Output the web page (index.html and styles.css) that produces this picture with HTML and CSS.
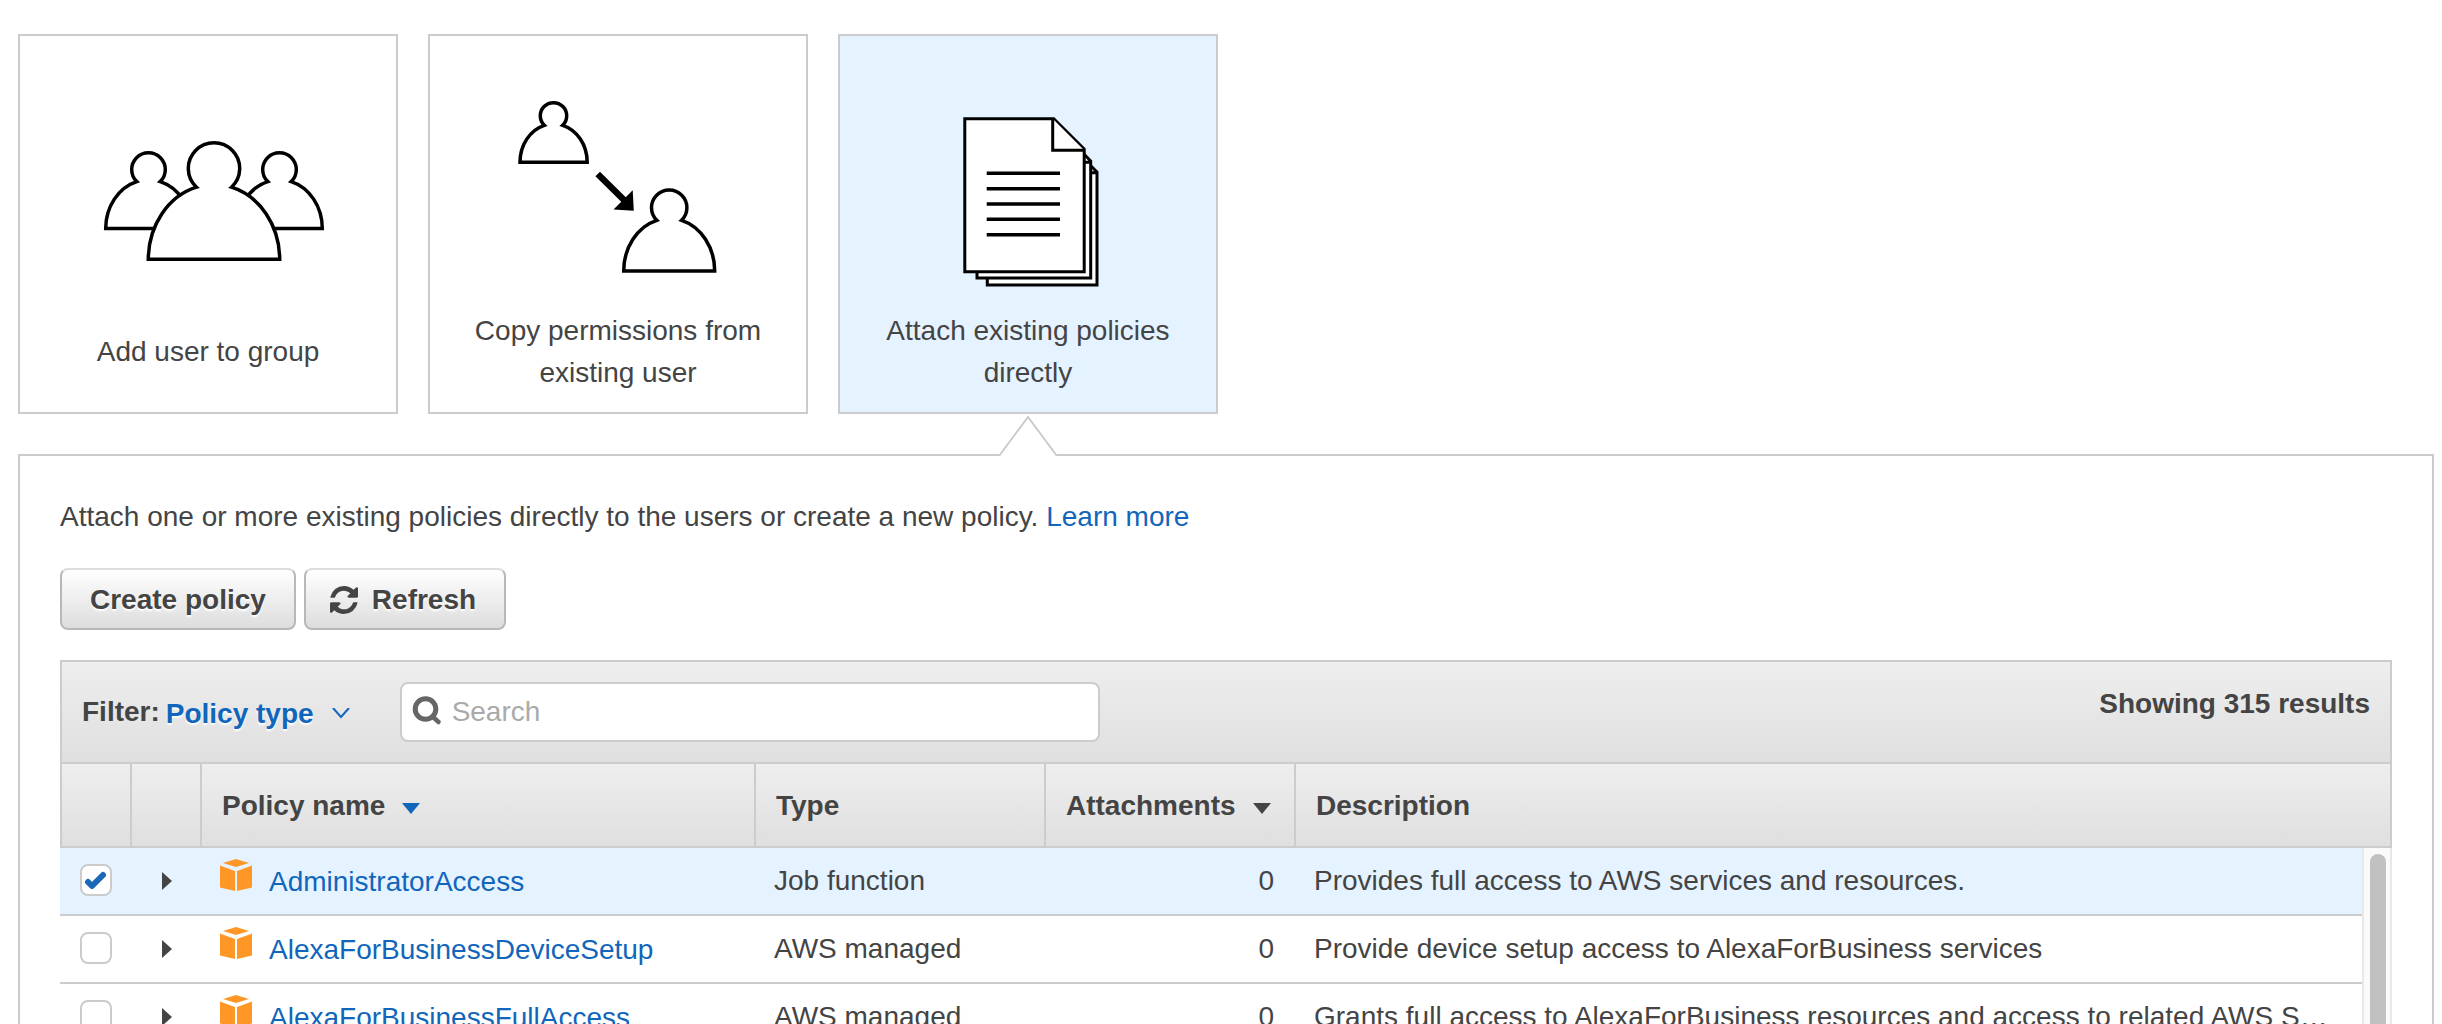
FILE: index.html
```html
<!DOCTYPE html>
<html lang="en">
<head>
<meta charset="utf-8">
<title>Set permissions</title>
<link rel="stylesheet" href="styles.css">
</head>
<body>
<svg class="defs" aria-hidden="true">
  <symbol id="cube" viewBox="0 0 32 32">
    <path fill="#ff9727" d="M16 0 29 4 16 8 3 4Z M0 6.500 15 12V32L0 28.500Z M32 6.500 17 12V32L32 28.500Z"/>
  </symbol>
</svg>
<main class="page">
  <div class="options">
    <button type="button" class="option">
      <svg class="option-art" viewBox="20 36 376 272" aria-hidden="true">
        <g fill="#fff" stroke="#000" stroke-width="3.5">
          <path d="M105.7 228.5A42.8 48.8 0 0 1 136.8 181.6A16.8 16.8 0 1 1 160.2 181.6A42.8 48.8 0 0 1 191.3 228.5Z"/>
          <path d="M236.7 228.5A42.8 48.8 0 0 1 267.8 181.6A16.8 16.8 0 1 1 291.2 181.6A42.8 48.8 0 0 1 322.3 228.5Z"/>
          <path d="M148.3 259.3A65.7 75 0 0 1 196.5 187.2A25.7 25.7 0 1 1 231.5 187.2A65.7 75 0 0 1 279.7 259.3Z"/>
        </g>
      </svg>
      <span class="option-label">Add user to group</span>
    </button>
    <button type="button" class="option">
      <svg class="option-art" viewBox="430 36 376 272" aria-hidden="true">
        <g fill="#fff" stroke="#000" stroke-width="3.5">
          <path d="M520 162.3A33.6 38.5 0 0 1 544.3 125.3A13.2 13.2 0 1 1 562.7 125.3A33.6 38.5 0 0 1 587.2 162.3Z"/>
          <path d="M623.7 271A45.5 52.7 0 0 1 656.8 220.3A17.7 17.7 0 1 1 681.6 220.3A45.5 52.7 0 0 1 714.7 271Z"/>
        </g>
        <path d="M597.7 174 625 201" stroke="#000" stroke-width="6.5"/>
        <path d="M632.7 190.3 633.8 210.7 613.5 209.5Z"/>
      </svg>
      <span class="option-label">Copy permissions from existing user</span>
    </button>
    <button type="button" class="option option-active" aria-pressed="true">
      <svg class="option-art" viewBox="840 36 376 272" aria-hidden="true">
        <g fill="#fff" stroke="#000" stroke-width="3">
          <path d="M987.3 160V285H1097V172L1085 160Z M1085 172.7H1097"/>
          <path d="M977 150V278H1090.7V161L1080 150Z M1080 162.3H1090.7"/>
          <path d="M964.8 118.7H1053.7L1084.2 149V271.7H964.8Z"/>
          <path d="M1052.7 118.7V150.3H1084.2"/>
        </g>
        <path d="M986.7 173.3H1060M986.7 188.7H1060M986.7 204H1060M986.7 219.3H1060M986.7 234.7H1060" stroke="#000" stroke-width="3.4"/>
      </svg>
      <span class="option-label">Attach existing policies directly</span>
      <svg class="option-pointer" viewBox="0 0 60 40" aria-hidden="true"><path d="M1 40 30 1 59 40" fill="#fff" stroke="#ccc" stroke-width="2"/></svg>
    </button>
  </div>

  <section class="panel">
    <p class="intro">Attach one or more existing policies directly to the users or create a new policy. <a href="#">Learn more</a></p>
    <div class="actions">
      <button type="button" class="btn">Create policy</button>
      <button type="button" class="btn btn-icon">
        <svg width="28" height="28" viewBox="0 0 1536 1536" aria-hidden="true"><path fill="#444" d="M1511 928q0 5-1 7-64 268-268 434.5t-478 166.5q-146 0-282.5-55t-243.5-157l-129 129q-19 19-45 19t-45-19-19-45v-448q0-26 19-45t45-19h448q26 0 45 19t19 45-19 45l-137 137q71 66 161 102t187 36q134 0 250-65t186-179q11-17 53-117 8-23 30-23h192q13 0 22.5 9.5t9.5 22.5zm25-800v448q0 26-19 45t-45 19h-448q-26 0-45-19t-19-45 19-45l138-138q-148-137-349-137-134 0-250 65t-186 179q-11 17-53 117-8 23-30 23h-199q-13 0-22.5-9.5t-9.5-22.5v-7q65-268 270-434.5t480-166.5q146 0 284 55.5t245 156.5l130-129q19-19 45-19t45 19 19 45z"/></svg>
        Refresh
      </button>
    </div>

    <div class="filter-bar">
      <span class="filter-label">Filter:</span>
      <button type="button" class="filter-type">Policy type
        <svg width="18" height="12" viewBox="0 0 18 12" aria-hidden="true"><path d="M1 0 9 9 17 0" fill="none" stroke="#16b" stroke-width="2"/></svg>
      </button>
      <label class="search">
        <svg width="30" height="32" viewBox="0 0 30 32" aria-hidden="true"><circle cx="13.500" cy="13" r="10.300" fill="none" stroke="#666" stroke-width="5"/><path d="M20.500 20.500 26.500 26" stroke="#666" stroke-width="4.500" stroke-linecap="round"/></svg>
        <input type="search" placeholder="Search" aria-label="Search policies">
      </label>
      <span class="results">Showing 315 results</span>
    </div>

    <div class="list">
      <table class="policies">
        <colgroup>
          <col class="col-check"><col class="col-expand"><col class="col-name"><col class="col-type"><col class="col-count"><col>
        </colgroup>
        <thead>
          <tr>
            <th></th>
            <th></th>
            <th>Policy name<svg class="sort" width="18" height="12" viewBox="0 0 18 12" aria-hidden="true"><path d="M0 0H18L9 11Z" fill="#16b"/></svg></th>
            <th>Type</th>
            <th>Attachments<svg class="sort" width="18" height="12" viewBox="0 0 18 12" aria-hidden="true"><path d="M0 0H18L9 11Z" fill="#444"/></svg></th>
            <th>Description</th>
          </tr>
        </thead>
        <tbody>
          <tr class="selected">
            <td class="check"><input type="checkbox" checked aria-label="Select AdministratorAccess"></td>
            <td class="expand"><button type="button" aria-label="Expand AdministratorAccess"></button></td>
            <td><svg class="cube" aria-hidden="true"><use href="#cube"/></svg><a href="#">AdministratorAccess</a></td>
            <td>Job function</td>
            <td class="count">0</td>
            <td class="desc">Provides full access to AWS services and resources.</td>
          </tr>
          <tr>
            <td class="check"><input type="checkbox" aria-label="Select AlexaForBusinessDeviceSetup"></td>
            <td class="expand"><button type="button" aria-label="Expand AlexaForBusinessDeviceSetup"></button></td>
            <td><svg class="cube" aria-hidden="true"><use href="#cube"/></svg><a href="#">AlexaForBusinessDeviceSetup</a></td>
            <td>AWS managed</td>
            <td class="count">0</td>
            <td class="desc">Provide device setup access to AlexaForBusiness services</td>
          </tr>
          <tr>
            <td class="check"><input type="checkbox" aria-label="Select AlexaForBusinessFullAccess"></td>
            <td class="expand"><button type="button" aria-label="Expand AlexaForBusinessFullAccess"></button></td>
            <td><svg class="cube" aria-hidden="true"><use href="#cube"/></svg><a href="#">AlexaForBusinessFullAccess</a></td>
            <td>AWS managed</td>
            <td class="count">0</td>
            <td class="desc">Grants full access to AlexaForBusiness resources and access to related AWS Services</td>
          </tr>
        </tbody>
      </table>
      <div class="scrollbar"><div class="thumb"></div></div>
    </div>
  </section>
</main>
</body>
</html>
```
FILE: styles.css
```css
* { box-sizing: border-box; }

body {
  margin: 0;
  background: #fff;
  color: #444;
  font: 28px/42px "Liberation Sans", Arial, sans-serif;
}

button, input { font: inherit; color: inherit; }
button { cursor: pointer; }
a { color: #16b; text-decoration: none; }
.defs { display: none; }

.page {
  display: flex;
  flex-direction: column;
  height: 100vh;
  overflow: hidden;
  padding: 34px 8px 0 18px;
}

/* Permission options */
.options {
  display: flex;
  gap: 30px;
  margin-bottom: 40px;
}
.option {
  position: relative;
  display: flex;
  flex-direction: column;
  flex: 0 0 380px;
  height: 380px;
  padding: 0;
  border: 2px solid #ccc;
  background: #fff;
}
.option-active { background: #e5f2ff; }
.option-art { display: block; width: 100%; height: 272px; }
.option-label {
  display: flex;
  align-items: center;
  justify-content: center;
  align-self: center;
  width: 320px;
  height: 88px;
  text-align: center;
}
.option-pointer {
  position: absolute;
  top: calc(100% + 4px);
  left: calc(50% - 30px);
  width: 60px;
  height: 40px;
}

/* Panel */
.panel {
  display: flex;
  flex-direction: column;
  flex: 1;
  min-height: 0;
  padding: 40px 40px 0;
  border: 2px solid #ccc;
  border-bottom: 0;
}
.intro { margin: 0 0 30px; }
.actions {
  display: flex;
  gap: 8px;
  margin-bottom: 30px;
}
.btn {
  display: flex;
  align-items: center;
  height: 62px;
  padding: 2px 28px 0;
  border: 2px solid #b8b8b8;
  border-top-color: #ddd;
  border-radius: 8px;
  background: linear-gradient(#fff, #ddd);
  font-weight: bold;
  text-shadow: 0 2px 2px #fff;
}
.btn-icon { gap: 14px; padding-left: 24px; }

/* Filter bar */
.filter-bar {
  display: flex;
  align-items: center;
  flex: 0 0 104px;
  padding: 0 20px;
  border: 2px solid #ccc;
  background: linear-gradient(#eee, #dfdfdf);
  font-weight: bold;
}
.filter-type {
  display: flex;
  align-items: center;
  gap: 18px;
  margin: 0 50px 0 6px;
  padding: 4px 0 0;
  border: 0;
  background: none;
  color: #16b;
  text-shadow: 0 2px 2px #fff;
}
.search {
  display: flex;
  align-items: center;
  gap: 10px;
  flex: 0 1 700px;
  height: 60px;
  padding: 0 10px;
  border: 2px solid #ccc;
  border-radius: 8px;
  background: #fff;
  font-weight: normal;
}
.search input {
  flex: 1;
  min-width: 0;
  padding: 0;
  border: 0;
  outline: 0;
  background: none;
}
.search input::placeholder { color: #aaa; }
.results {
  align-self: flex-start;
  margin: 21px 0 0 auto;
}

/* Policy list */
.list { position: relative; flex: 1; min-height: 0; }
.policies {
  width: 100%;
  table-layout: fixed;
  border-collapse: separate;
  border-spacing: 0;
}
.col-check { width: 72px; }
.col-expand { width: 70px; }
.col-name { width: 554px; }
.col-type { width: 290px; }
.col-count { width: 250px; }
th {
  height: 84px;
  padding: 2px 0 0 20px;
  border-right: 2px solid #ccc;
  border-bottom: 2px solid #ccc;
  background: linear-gradient(#eee, #dfdfdf);
  text-align: left;
  white-space: nowrap;
}
th:first-child { border-left: 2px solid #ccc; }
.sort { margin-left: 17px; }
td {
  height: 68px;
  padding: 0 0 0 18px;
  border-bottom: 2px solid #ccc;
  white-space: nowrap;
}
.selected td { background: #e5f2ff; }
.check { padding: 0 0 2px 20px; }
.check input {
  appearance: none;
  display: block;
  width: 32px;
  height: 32px;
  margin: 0;
  border: 2px solid #ccc;
  border-radius: 8px;
  background: #fff;
}
.check input:checked {
  background: #fff url("data:image/svg+xml,%3Csvg xmlns='http://www.w3.org/2000/svg' viewBox='0 0 28 28'%3E%3Cpath d='M6 16 10 20 21 9' fill='none' stroke='%231a68ba' stroke-width='6' stroke-linecap='round' stroke-linejoin='round'/%3E%3C/svg%3E") center / 28px 28px;
}
.expand { padding-left: 30px; }
.expand button {
  display: block;
  width: 10px;
  height: 18px;
  padding: 0;
  border: 0;
  background: #444;
  clip-path: polygon(0 0, 100% 50%, 0 100%);
}
.cube { width: 32px; height: 32px; margin-right: 17px; }
.count { padding-right: 22px; text-align: right; }
.desc {
  padding-right: 50px;
  overflow: hidden;
  text-overflow: ellipsis;
}
.scrollbar {
  position: absolute;
  top: 84px;
  right: 0;
  bottom: 0;
  width: 30px;
  padding: 6px 4px 0 6px;
  border: solid #e8e8e8;
  border-width: 0 2px;
  background: #fafafa;
}
.thumb {
  height: 100%;
  border-radius: 8px 8px 0 0;
  background: #c1c1c1;
}
```
